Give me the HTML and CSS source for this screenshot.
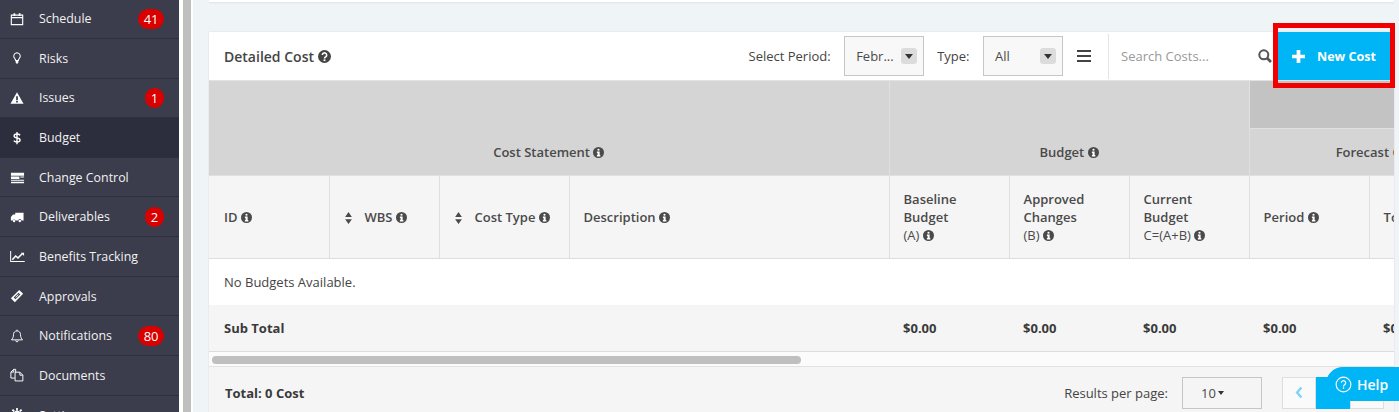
FILE: index.html
```html
<!DOCTYPE html>
<html lang="en">

<head>
    <meta charset="UTF-8">
    <meta name="viewport" content="width=device-width, initial-scale=1.0">
    <title>Budget - Detailed Cost</title>
    <link rel="stylesheet" href="styles.css">
</head>

<body>
    <svg class="sprite">
        <symbol id="i-info" viewBox="0 0 24 24">
            <circle cx="12" cy="12" r="12" fill="currentColor" />
            <circle cx="12" cy="6" r="2.4" fill="#fff" />
            <path d="M8.5 10h6v7.5h1.5v3H8.5v-3H10V13H8.5z" fill="#fff" />
        </symbol>
        <symbol id="i-help" viewBox="0 0 24 24">
            <circle cx="12" cy="12" r="12" fill="currentColor" />
            <path d="M8 9.2a4 4 0 1 1 6.2 3.4c-1.4.9-2.2 1.4-2.2 3" fill="none" stroke="#fff" stroke-width="3" />
            <rect x="10.3" y="17.3" width="3.4" height="3.2" fill="#fff" />
        </symbol>
        <symbol id="i-sort" viewBox="0 0 10 16">
            <path d="M5 0l4.5 6.5h-9zM5 16L.5 9.500h9z" fill="currentColor" />
        </symbol>
    </svg>

    <!-- side menu -->
    <nav class="sidebar">
        <ul class="nav-list">
            <li class="nav-item">
                <svg class="nav-icon" viewBox="0 0 16 16"><path d="M1.500 3.500h13v11h-13zM1.500 6.500h13" fill="none" stroke="#fff" stroke-width="1.300" /><path d="M4 1.500h2v3H4zM10 1.500h2v3h-2z" fill="#fff" /></svg>
                <span class="nav-label">Schedule</span><span class="badge">41</span>
            </li>
            <li class="nav-item">
                <svg class="nav-icon" viewBox="0 0 16 16"><path d="M8 2a3.800 3.800 0 0 0-2.500 6.600c.6.600.9 1.300.9 2.200h3.200c0-.9.300-1.600.9-2.200A3.800 3.800 0 0 0 8 2z" fill="none" stroke="#fff" stroke-width="1.200" /><path d="M6.500 11.500h3V13l-1 1.500h-1l-1-1.500z" fill="#fff" /></svg>
                <span class="nav-label">Risks</span>
            </li>
            <li class="nav-item">
                <svg class="nav-icon" viewBox="0 0 16 16"><path fill-rule="evenodd" d="M8 1.500l7.500 13H.5zM7 6v4.500h2V6zm0 5.500v1.700h2v-1.700z" fill="#fff" /></svg>
                <span class="nav-label">Issues</span><span class="badge">1</span>
            </li>
            <li class="nav-item active">
                <svg class="nav-icon" viewBox="0 0 16 16"><path d="M11.500 4.800C10.800 3.900 9.500 3.400 8 3.400c-1.900 0-3.300.9-3.300 2.300 0 3.200 6.800 1.500 6.800 4.700 0 1.400-1.500 2.300-3.500 2.300-1.600 0-3-.6-3.700-1.600M8 1v14" fill="none" stroke="#fff" stroke-width="1.600" /></svg>
                <span class="nav-label">Budget</span>
            </li>
            <li class="nav-item">
                <svg class="nav-icon nav-icon-wide" viewBox="0 0 16 16"><path d="M1 3h14v3H1zM1 7h9v2.500H1zM11 7h4v1H11zM1 10.500h14v1H1zM1 12.500h14v1.500H1z" fill="#fff" /></svg>
                <span class="nav-label">Change Control</span>
            </li>
            <li class="nav-item">
                <svg class="nav-icon" viewBox="0 0 16 16"><path d="M6 3h9.500v9H13a1.800 1.800 0 0 0-3.600 0H6.400A1.800 1.800 0 0 0 3 12H1V8l2.500-3H6z" fill="#fff" /><circle cx="4.700" cy="12.500" r="1.400" fill="#fff" /><circle cx="11.200" cy="12.500" r="1.400" fill="#fff" /></svg>
                <span class="nav-label">Deliverables</span><span class="badge">2</span>
            </li>
            <li class="nav-item">
                <svg class="nav-icon nav-icon-wide" viewBox="0 0 16 16"><path d="M.7 2v11.300h15" fill="none" stroke="#fff" stroke-width="1.100" /><path d="M2.500 11.500l3.500-4 2.500 2 4.500-4.500" fill="none" stroke="#fff" stroke-width="1.600" /><path d="M11.500 4h3.500v3.500z" fill="#fff" /></svg>
                <span class="nav-label">Benefits Tracking</span>
            </li>
            <li class="nav-item">
                <svg class="nav-icon" viewBox="0 0 16 16"><path d="M10.500 1l4.500 4.500-9.500 9.500L1 10.500z" fill="#fff" /><path d="M9.800 4.200l2 2-5.600 5.600-2-2z" fill="#3b3c4c" /><path d="M9.300 6l.7.700-3.300 3.300-.7-.7z" fill="#fff" /></svg>
                <span class="nav-label">Approvals</span>
            </li>
            <li class="nav-item">
                <svg class="nav-icon" viewBox="0 0 16 16"><path d="M8 2.200c-2.600 0-4 1.900-4 4.200 0 3-1 4.500-2.300 6h12.600C13 10.900 12 9.400 12 6.400c0-2.300-1.400-4.200-4-4.200zM6.500 13c0 1 .7 1.700 1.500 1.700s1.500-.7 1.500-1.700M8 .8v1.400" fill="none" stroke="#fff" stroke-width="1.100" /></svg>
                <span class="nav-label">Notifications</span><span class="badge">80</span>
            </li>
            <li class="nav-item">
                <svg class="nav-icon" viewBox="0 0 16 16"><path d="M6.500 4.800V1.500H4.300L1 4.700v6.800h4.500M4.300 1.500v3.200H1" fill="none" stroke="#fff" stroke-width="1.100" /><path d="M5.800 4.800h5.500v3.400h3.400v6.600H5.800zM11.300 4.800l3.400 3.400" fill="none" stroke="#fff" stroke-width="1.100" /></svg>
                <span class="nav-label">Documents</span>
            </li>
            <li class="nav-item">
                <svg class="nav-icon" viewBox="0 0 16 16"><circle cx="8" cy="8" r="3.500" fill="none" stroke="#fff" stroke-width="3" /><path d="M7 0h2v3H7zM2 2.500L3.500 1l2 2L4 4.500zM14 2.500L12.500 1l-2 2L12 4.500z" fill="#fff" /></svg>
                <span class="nav-label">Settings</span>
            </li>
        </ul>
    </nav>

    <div class="page-scroll"><div class="page-scroll-bar"></div></div>

    <main class="main">
        <div class="top-strip"></div>

        <section class="card">
            <header class="card-head">
                <h2 class="card-title">Detailed Cost <svg class="ico-help"><use href="#i-help" /></svg></h2>
                <div class="filters">
                    <span class="filter-label">Select Period:</span>
                    <div class="fake-select"><span>Febr...</span><i class="select-arrow"></i></div>
                    <span class="filter-label">Type:</span>
                    <div class="fake-select"><span>All</span><i class="select-arrow"></i></div>
                    <svg class="ico-menu" viewBox="0 0 14 12"><path d="M0 0h14v2H0zM0 5h14v2H0zM0 10h14v2H0z" fill="currentColor" /></svg>
                </div>
                <div class="search">
                    <span class="search-text">Search Costs...</span>
                    <svg class="ico-search" viewBox="0 0 14 14"><circle cx="5.800" cy="5.800" r="4.500" fill="none" stroke="currentColor" stroke-width="2" /><path d="M9 9l4 4" stroke="currentColor" stroke-width="2.600" /></svg>
                </div>
                <button class="btn-new">
                    <svg class="ico-plus" viewBox="0 0 14 14"><path d="M5 0h4v5h5v4H9v5H5V9H0V5h5z" fill="#fff" /></svg>
                    New Cost
                </button>
            </header>

            <div class="table-wrap">
                <table class="cost-table">
                    <colgroup>
                        <col class="col-id">
                        <col class="col-wbs">
                        <col class="col-type">
                        <col class="col-desc">
                        <col class="col-money">
                        <col class="col-money">
                        <col class="col-money">
                        <col class="col-money">
                        <col class="col-total">
                    </colgroup>
                    <thead>
                        <tr class="row-top">
                            <th class="group" colspan="4" rowspan="2">Cost Statement <svg class="ico-info"><use href="#i-info" /></svg></th>
                            <th class="group" colspan="3" rowspan="2">Budget <svg class="ico-info"><use href="#i-info" /></svg></th>
                            <th class="group-dark" colspan="2"></th>
                        </tr>
                        <tr class="row-mid">
                            <th class="group" colspan="2">Forecast Cost <svg class="ico-info"><use href="#i-info" /></svg></th>
                        </tr>
                        <tr class="row-cols">
                            <th>ID <svg class="ico-info"><use href="#i-info" /></svg></th>
                            <th><svg class="ico-sort"><use href="#i-sort" /></svg>WBS <svg class="ico-info"><use href="#i-info" /></svg></th>
                            <th><svg class="ico-sort"><use href="#i-sort" /></svg>Cost Type <svg class="ico-info"><use href="#i-info" /></svg></th>
                            <th>Description <svg class="ico-info"><use href="#i-info" /></svg></th>
                            <th>Baseline Budget<br><span class="formula">(A)</span> <svg class="ico-info"><use href="#i-info" /></svg></th>
                            <th>Approved Changes<br><span class="formula">(B)</span> <svg class="ico-info"><use href="#i-info" /></svg></th>
                            <th>Current Budget<br><span class="formula">C=(A+B)</span> <svg class="ico-info"><use href="#i-info" /></svg></th>
                            <th>Period <svg class="ico-info"><use href="#i-info" /></svg></th>
                            <th>Total <svg class="ico-info"><use href="#i-info" /></svg></th>
                        </tr>
                    </thead>
                    <tbody>
                        <tr class="row-empty">
                            <td colspan="9">No Budgets Available.</td>
                        </tr>
                    </tbody>
                    <tfoot>
                        <tr class="row-sub">
                            <td colspan="4">Sub Total</td>
                            <td class="amount">$0.00</td>
                            <td class="amount">$0.00</td>
                            <td class="amount">$0.00</td>
                            <td class="amount">$0.00</td>
                            <td class="amount">$0.00</td>
                        </tr>
                    </tfoot>
                </table>
            </div>

            <div class="table-scroll"><div class="table-scroll-bar"></div></div>

            <footer class="card-foot">
                <span class="total">Total: 0 Cost</span>
                <span class="per-page-label">Results per page:</span>
                <div class="per-page">10<i class="caret"></i></div>
                <div class="pager">
                    <span class="pager-btn"><svg class="ico-chevron" viewBox="0 0 8 14"><path d="M6.500 1.500L2 7l4.500 5.500" fill="none" stroke="currentColor" stroke-width="2.600" /></svg></span>
                    <span class="pager-btn current"></span>
                    <span class="pager-btn"></span>
                </div>
            </footer>
        </section>
    </main>

    <!-- red highlight around the button, drawn over the page -->
    <div class="highlight"></div>

    <div class="help">
        <svg class="ico-help-ring" viewBox="0 0 18 18"><circle cx="9" cy="9" r="7.800" fill="none" stroke="#fff" stroke-width="1.200" /><path d="M6.700 7.200a2.300 2.300 0 1 1 3.500 2c-.8.500-1.200.8-1.200 1.800" fill="none" stroke="#fff" stroke-width="1.300" /><rect x="8.300" y="12" width="1.400" height="1.500" fill="#fff" /></svg>
        <span>Help</span>
    </div>
</body>

</html>
```

FILE: styles.css
```css
body,
html {
    margin: 0;
    padding: 0;
    overflow: hidden;
    width: 100%;
    height: 100%;
}

body {
    display: flex;
    background-color: #fff;
    color: #4a4a4a;
    font-family: "Open Sans", "Liberation Sans", sans-serif;
    font-size: 13px;
}

.sprite {
    display: none;
}

/* side menu */
.sidebar {
    width: 179px;
    flex-shrink: 0;
    height: 100%;
    overflow: hidden;
    background-color: #3b3c4c;
}

.nav-list {
    list-style: none;
    margin: -0.8px 0 0;
    padding: 0;
}

.nav-item {
    display: flex;
    align-items: center;
    height: 39.67px;
    box-sizing: border-box;
    padding: 0 15px 0 10px;
    border-bottom: 1px solid #2e2f3f;
    color: #f2f2f2;
    font-size: 12.4px;
}

.nav-item.active {
    background-color: #2c2d3d;
    border-bottom-color: #2c2d3d;
}

.nav-icon {
    width: 14px;
    height: 14px;
    margin-right: 15px;
    flex-shrink: 0;
}

.nav-icon-wide {
    width: 15px;
    height: 15px;
    margin-right: 14px;
}

.nav-label {
    flex: 1;
}

.badge {
    min-width: 19px;
    height: 20px;
    box-sizing: border-box;
    padding: 0 5.5px;
    border-radius: 10px;
    background-color: #d90000;
    color: #fff;
    font-size: 13px;
    line-height: 20px;
    text-align: center;
}

/* page scrollbar */
.page-scroll {
    width: 14px;
    flex-shrink: 0;
    padding-left: 4px;
    box-sizing: border-box;
}

.page-scroll-bar {
    width: 8px;
    height: 100%;
    background-color: #bfbfbf;
}

.main {
    flex: 1;
    min-width: 0;
    padding: 0 5px 0 16px;
    background-color: #eff4f7;
}

.top-strip {
    height: 2px;
    background-color: #fff;
    box-shadow: 0 1px 2px rgba(0, 0, 0, 0.08);
    margin-bottom: 30px;
}

.card {
    background-color: #fff;
    box-shadow: 0 0 2px rgba(0, 0, 0, 0.1);
}

.card-head {
    display: flex;
    align-items: center;
    height: 48px;
    padding-left: 15px;
    border-bottom: 1px solid #e2e2e2;
}

.card-title {
    margin: 0;
    font-size: 14px;
    font-weight: 600;
    color: #444;
}

.ico-help {
    width: 13px;
    height: 13px;
    vertical-align: -1.500px;
    color: #444;
}

.filters {
    display: flex;
    align-items: center;
    margin-left: auto;
}

.filter-label {
    margin-right: 13.500px;
    color: #444;
}

.fake-select {
    display: flex;
    align-items: center;
    justify-content: space-between;
    width: 80px;
    height: 40px;
    box-sizing: border-box;
    padding: 0 6px 0 11px;
    margin-right: 13px;
    border: 1px solid #c6c6c6;
    background-color: #f8f8f8;
}

.select-arrow {
    display: flex;
    align-items: center;
    justify-content: center;
    width: 16px;
    height: 16px;
    border-radius: 3px;
    background-color: #dcdcdc;
}

.select-arrow::before {
    content: "";
    border: 4px solid transparent;
    border-top: 5px solid #333;
    border-bottom: 0;
}

.ico-menu {
    width: 14px;
    height: 12px;
    margin: 0 17px 0 1px;
    color: #444;
}

.search {
    display: flex;
    align-items: center;
    justify-content: space-between;
    width: 170px;
    height: 45px;
    box-sizing: border-box;
    padding: 0 6px 0 12px;
    border-left: 1px solid #e4e4e4;
}

.search-text {
    color: #999;
}

.ico-search {
    width: 14px;
    height: 14px;
    color: #555;
}

.btn-new {
    display: flex;
    align-items: center;
    width: 116px;
    height: 48px;
    padding: 0 0 0 14px;
    border: none;
    background-color: #00b5f6;
    color: #fff;
    font-family: inherit;
    font-size: 12.500px;
    font-weight: 700;
}

.ico-plus {
    width: 13px;
    height: 13px;
    margin-right: 12px;
}

.table-wrap {
    overflow: hidden;
}

.cost-table {
    width: 1312px;
    table-layout: fixed;
    border-collapse: collapse;
    font-weight: 600;
}

.col-id { width: 120px; }
.col-wbs { width: 110px; }
.col-type { width: 130px; }
.col-desc { width: 320px; }
.col-money { width: 120px; }
.col-total { width: 152px; }

.cost-table th {
    padding: 0 14px;
    border-right: 1px solid #dedede;
    border-bottom: 1px solid #dedede;
    background-color: #f5f5f5;
    color: #4a4a4a;
    font-weight: 600;
    line-height: 18px;
    text-align: left;
}

.cost-table th:first-child {
    padding-left: 15px;
}

.cost-table th.group {
    background-color: #d5d5d5;
    text-align: center;
    vertical-align: bottom;
    padding: 0 14px 14px;
    border-color: #e0e0e0;
}

.cost-table th.group-dark {
    background-color: #c3c3c3;
    border-color: #e0e0e0;
}

.row-top {
    height: 47px;
}

.row-mid {
    height: 47px;
}

.row-cols {
    height: 83px;
}

.formula {
    font-weight: 400;
}

.ico-info {
    width: 11px;
    height: 11px;
    vertical-align: -1px;
    color: #4a4a4a;
}

.ico-sort {
    width: 9px;
    height: 12px;
    margin-right: 12px;
    vertical-align: -2px;
    color: #4a4a4a;
}

.row-empty td {
    height: 46px;
    padding: 0 15px;
    font-weight: 400;
    color: #444;
}

.row-sub td {
    height: 46px;
    padding: 0 15px;
    background-color: #f5f5f5;
    border-bottom: 1px solid #dcdcdc;
    color: #3a3a3a;
    font-weight: 700;
}

.row-sub td.amount {
    padding-left: 14px;
}

.table-scroll {
    height: 15px;
    padding: 4px 3px;
    box-sizing: border-box;
    background-color: #fbfbfb;
    border-bottom: 1px solid #e2e2e2;
}

.table-scroll-bar {
    width: 589px;
    height: 8px;
    border-radius: 4px;
    background-color: #bfbfbf;
}

.card-foot {
    display: flex;
    align-items: center;
    height: 52px;
    padding: 0 15px 0 16px;
    box-sizing: border-box;
    background-color: #f5f5f5;
}

.total {
    font-weight: 700;
    color: #3a3a3a;
    margin-right: auto;
}

.per-page-label {
    margin-right: 14px;
    color: #444;
}

.per-page {
    display: flex;
    align-items: center;
    width: 80px;
    height: 32px;
    box-sizing: border-box;
    padding-left: 18px;
    margin-right: 20px;
    border: 1px solid #c6c6c6;
}

.caret {
    margin-left: 2px;
    border: 3.500px solid transparent;
    border-top: 4px solid #333;
    border-bottom: 0;
}

.pager {
    display: flex;
    height: 32px;
    margin-right: -5px;
}

.pager-btn {
    display: flex;
    align-items: center;
    justify-content: center;
    width: 34px;
    box-sizing: border-box;
    border: 1px solid #dedede;
    background-color: #fafafa;
}

.pager-btn.current {
    border-color: #00b5f6;
    background-color: #00b5f6;
}

.ico-chevron {
    width: 8px;
    height: 13px;
    color: #7dd4f5;
}

.highlight {
    position: absolute;
    left: 1273px;
    top: 23px;
    width: 122px;
    height: 65px;
    box-sizing: border-box;
    border: 5px solid #f00000;
}

.help {
    position: absolute;
    right: 0;
    top: 367px;
    display: flex;
    align-items: center;
    gap: 5px;
    width: 73px;
    height: 34px;
    box-sizing: border-box;
    padding-left: 9px;
    border-radius: 17px 0 0 17px;
    background-color: #00b5f6;
    color: #fff;
    font-size: 14px;
    font-weight: 600;
}

.ico-help-ring {
    width: 17px;
    height: 17px;
}
```
